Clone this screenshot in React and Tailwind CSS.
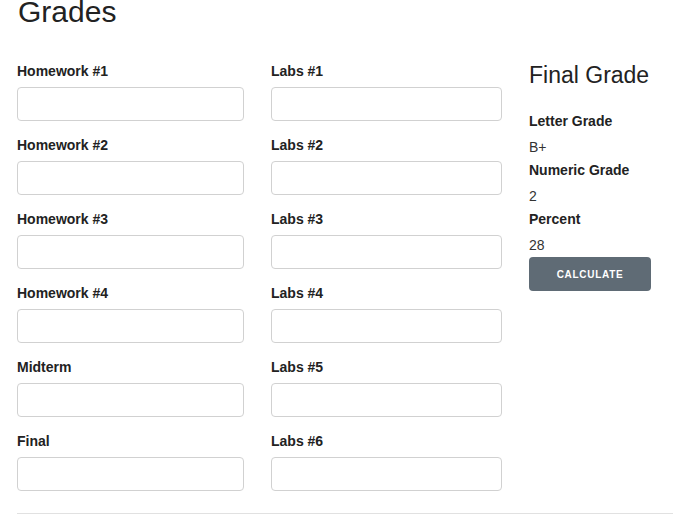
import React from 'react';

const left = ['Homework #1', 'Homework #2', 'Homework #3', 'Homework #4', 'Midterm', 'Final'];
const right = ['Labs #1', 'Labs #2', 'Labs #3', 'Labs #4', 'Labs #5', 'Labs #6'];

function Field({ label, width }) {
  return (
    <div className="flex flex-col">
      <label className="text-[14px] leading-[20px] font-bold text-[#222] mb-[6px]">{label}</label>
      <input
        type="text"
        className={`${width} h-[34px] mb-[14px] bg-white border border-[#d1d1d1] rounded-[4px] px-[10px] outline-none`}
      />
    </div>
  );
}

function Result({ label, value }) {
  return (
    <div className="flex flex-col">
      <div className="text-[14px] leading-[20px] font-bold text-[#222] mb-[6px]">{label}</div>
      <div className="text-[14px] leading-[20px] text-[#333] mb-[3px]">{value}</div>
    </div>
  );
}

export default function App() {
  return (
    <div className="min-h-[517px] bg-white pl-[17px] font-['Liberation_Sans',Arial,sans-serif] text-[#222] overflow-hidden">
      <h1 className="text-[30px] leading-[30px] font-normal -mt-[3px] ml-[1px]">Grades</h1>

      <div className="flex mt-[34px]">
        <div className="flex flex-col">
          {left.map(l => (
            <Field key={l} label={l} width="w-[227px]" />
          ))}
        </div>
        <div className="flex flex-col ml-[27px]">
          {right.map(l => (
            <Field key={l} label={l} width="w-[231px]" />
          ))}
        </div>
        <div className="flex flex-col ml-[27px]">
          <h4 className="text-[23px] leading-[28px] font-normal mb-[22px]">Final Grade</h4>
          <Result label="Letter Grade" value="B+" />
          <Result label="Numeric Grade" value="2" />
          <Result label="Percent" value="28" />
          <button className="w-[122px] h-[34px] -mt-[1px] bg-[#5f6b75] rounded-[4px] text-white text-[10px] font-bold tracking-[0.7px] uppercase">
            Calculate
          </button>
        </div>
      </div>

      <div className="border-t border-[#e1e1e1] mt-[8px]"></div>
    </div>
  );
}
